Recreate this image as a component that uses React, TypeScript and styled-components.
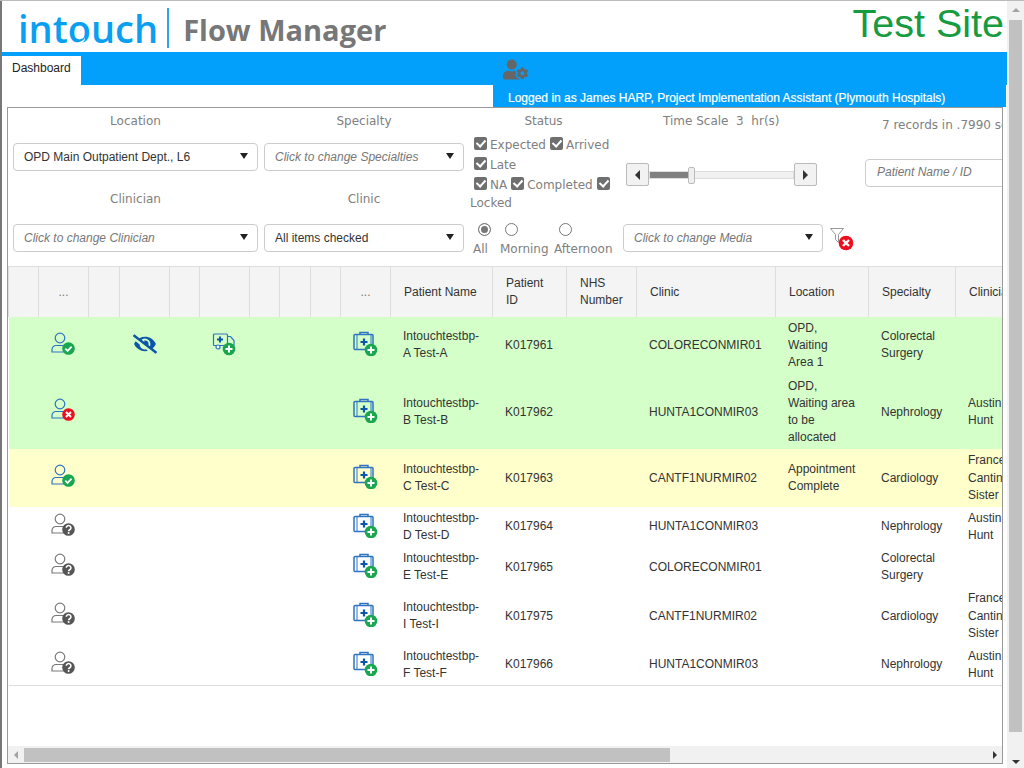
import { createGlobalStyle, styled } from 'styled-components';
import { FaEyeSlash, FaUserCog } from 'react-icons/fa';

const GREEN = '#1aa64f';
const RED = '#f00d1e';
const BLUE = '#2f74c0';
const DARK_BLUE = '#0b56a8';
const GREY = '#7a7a7a';

const PersonIcon = ({ status }: { status: 'ok' | 'no' | 'unknown' }) => {
  const line = status === 'unknown' ? GREY : BLUE;
  return (
    <svg width="25" height="24" viewBox="0 0 25 24" fill="none">
      <circle cx="9" cy="6" r="4.8" stroke={line} strokeWidth="1.2" />
      <path d="M1 20v-2.5a4 4 0 0 1 4-4h8v6.500H1z" stroke={line} strokeWidth="1.2" fill="none" />
      {status === 'ok' && (
        <>
          <circle cx="17.500" cy="16.500" r="6.300" fill={GREEN} />
          <path d="M14.300 16.600l2.300 2.300 4-4.200" stroke="#fff" strokeWidth="1.800" />
        </>
      )}
      {status === 'no' && (
        <>
          <circle cx="17.500" cy="16.500" r="6.300" fill={RED} />
          <path d="M15 14l5 5M20 14l-5 5" stroke="#fff" strokeWidth="2" />
        </>
      )}
      {status === 'unknown' && (
        <>
          <circle cx="17.500" cy="16.500" r="6.300" fill="#555" />
          <path d="M15.300 14.800a2.300 2.300 0 1 1 3.500 2c-.8.500-1.200.800-1.200 1.500" stroke="#fff" strokeWidth="1.600" />
          <circle cx="17.600" cy="20" r="1" fill="#fff" />
        </>
      )}
    </svg>
  );
};

const PlusBadge = ({ cx, cy }: { cx: number; cy: number }) => (
  <>
    <circle cx={cx} cy={cy} r="6.300" fill={GREEN} />
    <path d={`M${cx - 3.500} ${cy}h7M${cx} ${cy - 3.500}v7`} stroke="#fff" strokeWidth="2" />
  </>
);

const AmbulanceIcon = () => (
  <svg width="25" height="24" viewBox="0 0 25 24" fill="none">
    <rect x="1.500" y="2" width="14" height="11.500" rx="1" stroke={BLUE} strokeWidth="1.200" />
    <path d="M8 4.500v6M5 7.500h6" stroke={DARK_BLUE} strokeWidth="2" />
    <path d="M15.500 4.500h3l3.500 4v5h-6.500" stroke={BLUE} strokeWidth="1.200" />
    <circle cx="6" cy="15" r="2" fill="#fff" stroke={BLUE} strokeWidth="1.200" />
    <PlusBadge cx={17} cy={17} />
  </svg>
);

const CaseIcon = () => (
  <svg width="25" height="25" viewBox="1 0 25 25" fill="none">
    <rect x="2" y="3.500" width="19" height="15" rx="1" stroke={BLUE} strokeWidth="1.500" />
    <path d="M8 3.500V1.500h8v2" stroke={BLUE} strokeWidth="1.500" />
    <path d="M5 4v14M19 4v14" stroke={BLUE} strokeWidth="1" />
    <path d="M12 7.500v7M8.500 11h7" stroke={DARK_BLUE} strokeWidth="2.200" />
    <PlusBadge cx={19} cy={19} />
  </svg>
);

const ClearFilterIcon = () => (
  <svg width="26" height="24" viewBox="0 0 26 24" fill="none">
    <path d="M1.500 1.500h13l-5 6v8l-3-3v-5z" stroke="#999" strokeWidth="1" fill="#fff" />
    <circle cx="17" cy="16" r="7.300" fill={RED} />
    <path d="M14 13l6 6M20 13l-6 6" stroke="#fff" strokeWidth="2.400" />
  </svg>
);

const columns = [30, 50, 31, 50, 30, 50, 30, 31, 30, 50, 102, 74, 70, 139, 93, 87, 80];
const headers: Record<number, string> = {
  1: '...',
  9: '...',
  10: 'Patient Name',
  11: 'Patient ID',
  12: 'NHS Number',
  13: 'Clinic',
  14: 'Location',
  15: 'Specialty',
  16: 'Clinician',
};

type Patient = {
  tone: 'arrived' | 'complete' | 'plain';
  person: 'ok' | 'no' | 'unknown';
  extras?: boolean;
  name: string;
  id: string;
  clinic: string;
  location: string;
  specialty: string;
  clinician: string;
};

const patients: Patient[] = [
  { tone: 'arrived', person: 'ok', extras: true, name: 'Intouchtestbp-A Test-A', id: 'K017961', clinic: 'COLORECONMIR01', location: 'OPD, Waiting\nArea 1', specialty: 'Colorectal Surgery', clinician: '' },
  { tone: 'arrived', person: 'no', name: 'Intouchtestbp-B Test-B', id: 'K017962', clinic: 'HUNTA1CONMIR03', location: 'OPD, Waiting area to be allocated', specialty: 'Nephrology', clinician: 'Austin Hunt' },
  { tone: 'complete', person: 'ok', name: 'Intouchtestbp-C Test-C', id: 'K017963', clinic: 'CANTF1NURMIR02', location: 'Appointment Complete', specialty: 'Cardiology', clinician: 'Frances Cantin Sister' },
  { tone: 'plain', person: 'unknown', name: 'Intouchtestbp-D Test-D', id: 'K017964', clinic: 'HUNTA1CONMIR03', location: '', specialty: 'Nephrology', clinician: 'Austin Hunt' },
  { tone: 'plain', person: 'unknown', name: 'Intouchtestbp-E Test-E', id: 'K017965', clinic: 'COLORECONMIR01', location: '', specialty: 'Colorectal Surgery', clinician: '' },
  { tone: 'plain', person: 'unknown', name: 'Intouchtestbp-I Test-I', id: 'K017975', clinic: 'CANTF1NURMIR02', location: '', specialty: 'Cardiology', clinician: 'Frances Cantin Sister' },
  { tone: 'plain', person: 'unknown', name: 'Intouchtestbp-F Test-F', id: 'K017966', clinic: 'HUNTA1CONMIR03', location: '', specialty: 'Nephrology', clinician: 'Austin Hunt' },
];

const App = () => {
  return (
    <>
      <GlobalStyle />
      <Screen>
        <Page>
          <Header>
            <Logo>
              <LogoMark>
                int<LogoO>o</LogoO>uch
              </LogoMark>
              <LogoDivider />
              <LogoTitle>Flow Manager</LogoTitle>
            </Logo>
            <SiteName>Test Site</SiteName>
          </Header>
          <NavBar>
            <Tab>Dashboard</Tab>
            <NavIcon>
              <FaUserCog size={25} />
            </NavIcon>
          </NavBar>
          <LoggedRow>
            <LoggedIn>Logged in as James HARP, Project Implementation Assistant (Plymouth Hospitals)</LoggedIn>
          </LoggedRow>
          <Panel>
            <Filters>
              <Field>
                <FieldLabel>Location</FieldLabel>
                <Select>OPD Main Outpatient Dept., L6</Select>
              </Field>
              <Field>
                <FieldLabel>Specialty</FieldLabel>
                <Select $placeholder>Click to change Specialties</Select>
              </Field>
              <StatusColumn>
                <FieldLabel>Status</FieldLabel>
                <StatusList>
                  <StatusLine>
                    <Check />Expected<Check $gap />Arrived
                  </StatusLine>
                  <StatusLine>
                    <Check />Late
                  </StatusLine>
                  <StatusLine>
                    <Check />NA<Check $gap />Completed<Check $gap />
                  </StatusLine>
                  <LockedLine>Locked</LockedLine>
                </StatusList>
                <RadioGroup>
                  <RadioItem $width={27}>
                    <Radio $checked />
                    All
                  </RadioItem>
                  <RadioItem $width={54}>
                    <Radio />
                    Morning
                  </RadioItem>
                  <RadioItem $width={60}>
                    <Radio />
                    Afternoon
                  </RadioItem>
                </RadioGroup>
              </StatusColumn>
              <TimeCell>
                <TimeLabel>Time Scale&nbsp; 3 &nbsp;hr(s)</TimeLabel>
                <Slider>
                  <SliderButton>
                    <Arrow $dir="left" $size={5} />
                  </SliderButton>
                  <SliderTrack>
                    <SliderFill style={{ width: 42 }} />
                    <SliderThumb />
                  </SliderTrack>
                  <SliderButton>
                    <Arrow $dir="right" $size={5} />
                  </SliderButton>
                </Slider>
              </TimeCell>
              <SearchCell>
                <Records>7 records in .7990 seconds</Records>
                <SearchBox>Patient Name / ID</SearchBox>
              </SearchCell>
              <Field $low>
                <FieldLabel>Clinician</FieldLabel>
                <Select $placeholder>Click to change Clinician</Select>
              </Field>
              <Field $low>
                <FieldLabel>Clinic</FieldLabel>
                <Select>All items checked</Select>
              </Field>
              <MediaCell>
                <Select $placeholder>Click to change Media</Select>
              </MediaCell>
              <ClearCell>
                <ClearFilterIcon />
              </ClearCell>
            </Filters>
            <TableArea>
              <Table>
                <colgroup>
                  {columns.map((width, idx) => (
                    <col key={idx} style={{ width }} />
                  ))}
                </colgroup>
                <thead>
                  <tr>
                    {columns.map((_, idx) => (
                      <HeadCell key={idx} $dots={headers[idx] === '...'}>
                        {headers[idx]}
                      </HeadCell>
                    ))}
                  </tr>
                </thead>
                <tbody>
                  {patients.map((item) => (
                    <Row key={item.id} $tone={item.tone}>
                      <td />
                      <IconCell>
                        <PersonIcon status={item.person} />
                      </IconCell>
                      <td />
                      <IconCell>
                        {item.extras && <EyeIcon size={24} />}
                      </IconCell>
                      <td />
                      <IconCell>{item.extras && <AmbulanceIcon />}</IconCell>
                      <td />
                      <td />
                      <td />
                      <IconCell>
                        <CaseIcon />
                      </IconCell>
                      <Cell>{item.name}</Cell>
                      <Cell>{item.id}</Cell>
                      <Cell />
                      <Cell>{item.clinic}</Cell>
                      <Cell>{item.location}</Cell>
                      <Cell>{item.specialty}</Cell>
                      <Cell>{item.clinician}</Cell>
                    </Row>
                  ))}
                </tbody>
              </Table>
            </TableArea>
            <HScroll>
              <Arrow $dir="left" $size={4} $muted />
              <HTrack>
                <HThumb />
              </HTrack>
              <Arrow $dir="right" $size={4} />
            </HScroll>
          </Panel>
        </Page>
        <VScroll>
          <Arrow $dir="up" $size={4} $muted />
          <VTrack>
            <VThumb />
          </VTrack>
          <Arrow $dir="down" $size={4} />
        </VScroll>
      </Screen>
    </>
  );
};

export default App;

const GlobalStyle = createGlobalStyle`
  html, body {
    margin: 0;
    height: 100%;
    overflow: hidden;
    background: #fff;
  }
  * {
    box-sizing: border-box;
  }
`;

const Screen = styled.div`
  display: flex;
  width: 1024px;
  height: 768px;
  border-top: 1px solid #bbb;
  font-family: 'Liberation Sans', Arial, sans-serif;
  font-size: 12px;
  color: #333;
`;

const Page = styled.div`
  flex: 1;
  min-width: 0;
  display: flex;
  flex-direction: column;
  border-left: 2px solid #777;
`;

const Header = styled.header`
  height: 51px;
  display: flex;
  justify-content: space-between;
  padding-right: 3px;
`;

const Logo = styled.div`
  display: flex;
  align-items: center;
  padding-left: 16px;
  height: 50px;
`;

const LogoMark = styled.span`
  font-family: 'Open Sans', sans-serif;
  font-weight: 600;
  font-size: 38px;
  margin-top: 3px;
  line-height: 50px;
  color: #0b9ff2;
`;

const LogoO = styled.span`
  position: relative;

  &::after {
    content: '';
    position: absolute;
    left: 5px;
    bottom: 10px;
    width: 12px;
    height: 8px;
    border-bottom: 2px solid #fff;
    border-radius: 50%;
    transform: rotate(-20deg);
  }
`;

const LogoDivider = styled.span`
  width: 2px;
  height: 40px;
  margin: 4px 14px 0 9px;
  background: #2ba6ee;
`;

const LogoTitle = styled.span`
  font-family: 'Open Sans', sans-serif;
  font-weight: 700;
  font-size: 29px;
  color: #777;
  margin-top: 6px;
`;

const SiteName = styled.div`
  font-size: 39.500px;
  line-height: 44px;
  color: #169b41;
`;

const NavBar = styled.nav`
  height: 33px;
  background: #02a0fa;
  display: flex;
  padding-top: 4px;
`;

const Tab = styled.div`
  width: 79px;
  height: 29px;
  padding: 4px 0 0 10px;
  background: #fff;
  color: #222;
  line-height: 17px;
`;

const NavIcon = styled.div`
  margin: 1px 0 0 422px;
  color: #666;
  display: flex;
`;

const LoggedRow = styled.div`
  height: 22px;
  display: flex;
  justify-content: flex-end;
  padding-right: 1px;
`;

const LoggedIn = styled.div`
  width: 513px;
  padding: 5px 0 0 15px;
  background: #02a0fa;
  color: #fff;
  line-height: 17px;
  white-space: nowrap;
  -webkit-text-stroke: 0.2px #fff;
`;

const Panel = styled.main`
  width: 996px;
  height: 657px;
  margin-left: 5px;
  border: 1px solid #999;
  display: flex;
  flex-direction: column;
  overflow: hidden;
`;

const Filters = styled.section`
  height: 158px;
  flex: none;
  padding: 5px 0 0 5px;
  display: grid;
  grid-template-columns: 245px 200px 147px 200px 1fr;
  grid-template-rows: 78px 75px;
  column-gap: 6px;
`;

const Field = styled.div<{ $low?: boolean }>`
  display: flex;
  flex-direction: column;
  gap: ${(props) => (props.$low ? '16px' : '13px')};
`;

const FieldLabel = styled.div`
  font-family: 'DejaVu Sans', sans-serif;
  font-size: 12px;
  line-height: 17px;
  color: #808080;
  text-align: center;
`;

const Select = styled.div<{ $placeholder?: boolean }>`
  position: relative;
  height: 28px;
  padding-left: 10px;
  border: 1px solid #ccc;
  border-radius: 4px;
  background: #fff;
  line-height: 26px;
  white-space: nowrap;
  font-style: ${(props) => (props.$placeholder ? 'italic' : 'normal')};
  color: ${(props) => (props.$placeholder ? '#777' : '#333')};

  &::after {
    content: '';
    position: absolute;
    top: 9px;
    right: 9px;
    border-style: solid;
    border-width: 6px 4px 0;
    border-color: #222 transparent transparent;
  }
`;

const StatusColumn = styled.div`
  grid-column: 3;
  grid-row: 1 / 3;
  display: flex;
  flex-direction: column;
`;

const StatusList = styled.div`
  margin-top: 5px;
  font-family: 'DejaVu Sans', sans-serif;
  color: #808080;
`;

const StatusLine = styled.div`
  height: 20px;
  line-height: 20px;
  display: flex;
  align-items: center;
  padding-left: 4px;
  white-space: nowrap;
`;

const LockedLine = styled.div`
  height: 16px;
  line-height: 16px;
`;

const Check = styled.span<{ $gap?: boolean }>`
  position: relative;
  top: -2px;
  width: 13px;
  height: 13px;
  margin: 0 3px 0 ${(props) => (props.$gap ? '4px' : '0')};
  border-radius: 2px;
  background: #6f6f6f;

  &::after {
    content: '';
    position: absolute;
    left: 4px;
    top: 1.500px;
    width: 4px;
    height: 7px;
    border: solid #fff;
    border-width: 0 2px 2px 0;
    transform: rotate(42deg);
  }
`;

const RadioGroup = styled.div`
  margin: 12px 0 0 3px;
  display: flex;
  font-family: 'DejaVu Sans', sans-serif;
  color: #808080;
`;

const RadioItem = styled.div<{ $width: number }>`
  width: ${(props) => props.$width}px;
  display: flex;
  flex-direction: column;
  align-items: flex-start;
  gap: 5px;
  line-height: 17px;
  white-space: nowrap;
`;

const Radio = styled.span<{ $checked?: boolean }>`
  width: 13px;
  height: 13px;
  margin-left: 5px;
  border: 1px solid #777;
  border-radius: 50%;
  background: ${(props) => (props.$checked ? '#777' : '#fff')};
  box-shadow: ${(props) => (props.$checked ? 'inset 0 0 0 2px #fff' : 'none')};
`;

const TimeCell = styled.div`
  display: flex;
  flex-direction: column;
`;

const TimeLabel = styled.div`
  padding-left: 40px;
  font-family: 'DejaVu Sans', sans-serif;
  line-height: 17px;
  color: #808080;
  white-space: nowrap;
`;

const Slider = styled.div`
  margin: 33px 0 0 3px;
  width: 191px;
  height: 23px;
  display: flex;
  align-items: center;
`;

const SliderButton = styled.div`
  width: 23px;
  height: 23px;
  flex: none;
  display: flex;
  align-items: center;
  justify-content: center;
  background: #f2f2f2;
  border: 1px solid #bbb;
  border-radius: 2px;
`;

const SliderTrack = styled.div`
  position: relative;
  flex: 1;
  height: 8px;
  background: #f1f1f1;
  border: 1px solid #ddd;
`;

const SliderFill = styled.div`
  height: 100%;
  background: #808080;
`;

const SliderThumb = styled.div`
  position: absolute;
  left: 38px;
  top: -5px;
  width: 7px;
  height: 17px;
  background: #efefef;
  border: 1px solid #bbb;
  border-radius: 2px;
`;

const SearchCell = styled.div`
  min-width: 0;
  display: flex;
  flex-direction: column;
  padding-left: 36px;
`;

const Records = styled.div`
  margin: 4px 0 0 17px;
  font-family: 'DejaVu Sans', sans-serif;
  line-height: 17px;
  color: #808080;
  white-space: nowrap;
`;

const SearchBox = styled.div`
  width: 160px;
  height: 28px;
  flex: none;
  margin-top: 25px;
  padding-left: 11px;
  border: 1px solid #ccc;
  border-radius: 4px;
  line-height: 24px;
  font-style: italic;
  color: #777;
`;

const MediaCell = styled.div`
  padding-top: 33px;
`;

const ClearCell = styled.div`
  padding-top: 36px;
`;

const TableArea = styled.div`
  flex: 1;
  min-height: 0;
  overflow: hidden;
`;

const Table = styled.table`
  width: 1027px;
  table-layout: fixed;
  border-collapse: collapse;
  line-height: 1.42857;
  border-bottom: 1px solid #ddd;
`;

const HeadCell = styled.th<{ $dots?: boolean }>`
  height: 50px;
  padding: 1px 13px 0;
  background: #f4f4f4;
  border: 1px solid #ddd;
  border-bottom: 0;
  font-weight: 400;
  text-align: ${(props) => (props.$dots ? 'center' : 'left')};
  color: ${(props) => (props.$dots ? '#777' : '#333')};
`;

const rowColors = {
  arrived: '#d4ffc8',
  complete: '#ffffcc',
  plain: '#fff',
};

const Cell = styled.td`
  padding: 3px 12.500px;
  vertical-align: middle;
  white-space: pre-line;
`;

const Row = styled.tr<{ $tone: Patient['tone'] }>`
  background: ${(props) => rowColors[props.$tone]};

  &:first-child ${Cell} {
    padding-bottom: 4px;
  }
`;

const IconCell = styled.td`
  padding: 0;
  text-align: center;
  vertical-align: middle;
  line-height: 0;

  svg {
    position: relative;
    top: -2px;
  }
`;

const EyeIcon = styled(FaEyeSlash)`
  color: ${DARK_BLUE};
`;

const HScroll = styled.div`
  height: 17px;
  flex: none;
  display: flex;
  align-items: center;
  padding: 0 5px 0 6px;
  background: #f1f1f1;
`;

const HTrack = styled.div`
  flex: 1;
  height: 100%;
  padding: 2px 0 1px 6px;
`;

const HThumb = styled.div`
  width: 646px;
  height: 100%;
  background: #c1c1c1;
`;

const VScroll = styled.div`
  width: 17px;
  flex: none;
  display: flex;
  flex-direction: column;
  align-items: center;
  padding: 7px 0 4px;
  background: #f1f1f1;
`;

const VTrack = styled.div`
  flex: 1;
  width: 100%;
  padding: 8px 2px 0;
`;

const VThumb = styled.div`
  height: 712px;
  background: #c1c1c1;
`;

const arrowBorders = {
  left: (s: number, c: string) => `border-width: ${s}px ${s}px ${s}px 0; border-color: transparent ${c} transparent transparent;`,
  right: (s: number, c: string) => `border-width: ${s}px 0 ${s}px ${s}px; border-color: transparent transparent transparent ${c};`,
  up: (s: number, c: string) => `border-width: 0 ${s}px ${s}px; border-color: transparent transparent ${c};`,
  down: (s: number, c: string) => `border-width: ${s}px ${s}px 0; border-color: ${c} transparent transparent;`,
};

const Arrow = styled.span<{ $dir: keyof typeof arrowBorders; $size: number; $muted?: boolean }>`
  flex: none;
  width: 0;
  height: 0;
  border-style: solid;
  ${(props) => arrowBorders[props.$dir](props.$size, props.$muted ? '#a3a3a3' : '#333')}
`;
